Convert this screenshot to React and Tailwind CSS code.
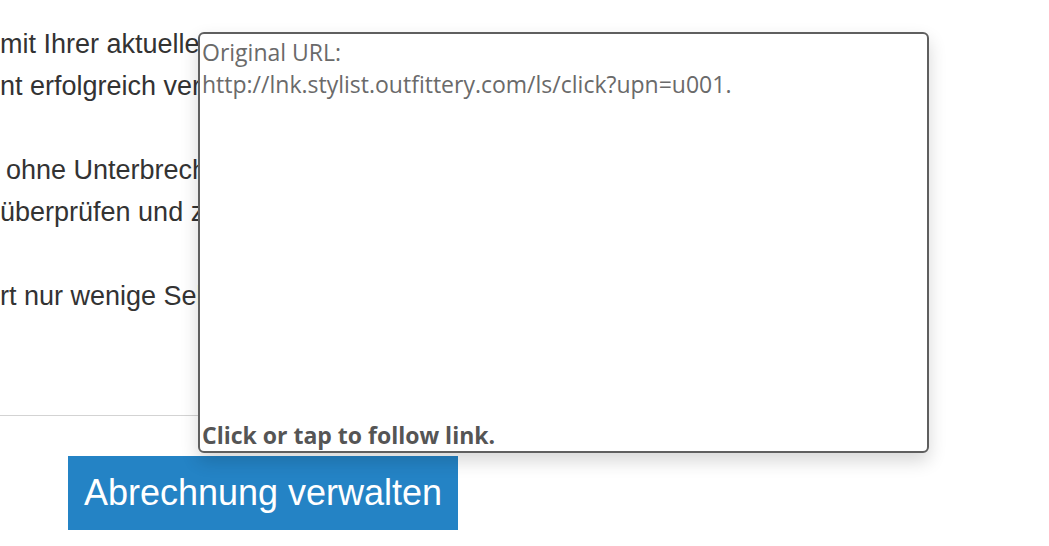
import React from "react";

const lines = [
    { text: "mit Ihrer aktuellen Zahlungsmethode konnte", indent: false },
    { text: "nt erfolgreich verarbeitet werden.", indent: false },
    { text: "", indent: false },
    { text: "ohne Unterbrechung weiter nutzen zu können,", indent: true },
    { text: "überprüfen und zu aktualisieren.", indent: false },
    { text: "", indent: false },
    { text: "rt nur wenige Sekunden.", indent: false },
];

function LinkPreview() {
    return (
        <div className="absolute left-[198px] top-[32px] w-[731px] h-[421px] bg-white border-2 border-[#5f5f5f] rounded-[6px] shadow-[0_8px_18px_rgba(0,0,0,0.16)] flex flex-col justify-between pl-[2px] pt-[2px] pb-0 font-['Open_Sans',sans-serif] text-[23px] leading-[32px] text-[#6a6a6a]">
            <div>
                <div>Original URL:</div>
                <div>http://lnk.stylist.outfittery.com/ls/click?upn=u001.</div>
            </div>
            <div className="font-bold text-[#555]">Click or tap to follow link.</div>
        </div>
    );
}

export default function App() {
    return (
        <div className="relative w-[1049px] h-[546px] overflow-hidden bg-white font-['Liberation_Sans',Arial,sans-serif]">
            {/* email body */}
            <div className="pt-[23px] text-[27px] leading-[42px] text-[#333] whitespace-nowrap">
                {lines.map((line, i) => (
                    <div key={i} className={line.indent ? "pl-[6px] h-[42px]" : "h-[42px]"}>
                        {line.text}
                    </div>
                ))}
            </div>
            <div className="mt-[98px] w-[600px] border-t border-[#d3d3d3]" />
            <div className="mt-[40px] ml-[68px]">
                <button className="w-[390px] h-[74px] bg-[#2483c5] text-white text-[36px] leading-none">
                    Abrechnung verwalten
                </button>
            </div>

            <LinkPreview />
        </div>
    );
}
